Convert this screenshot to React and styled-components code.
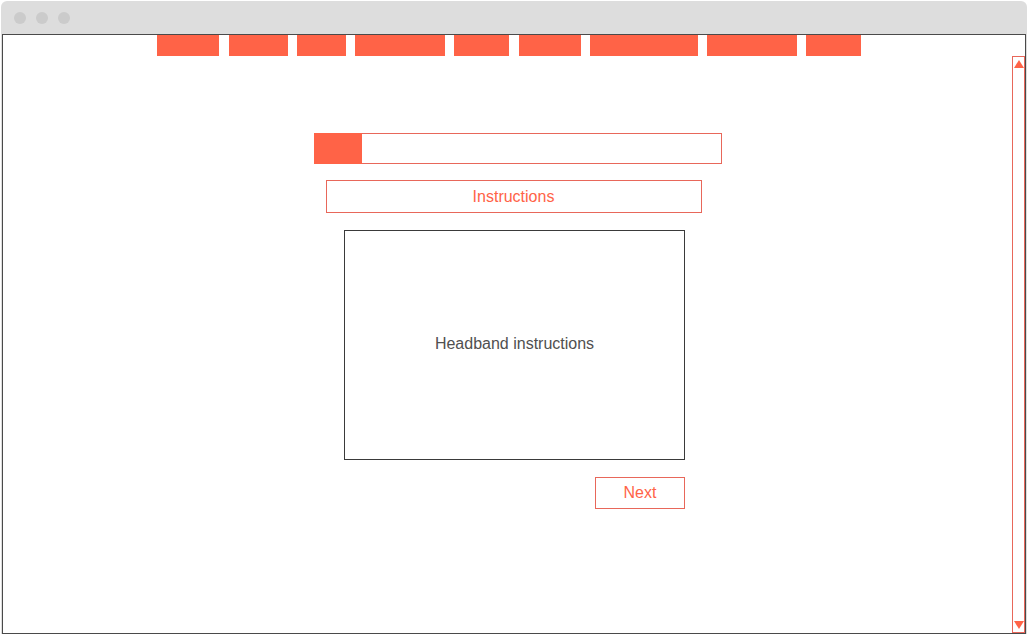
import React from "react"
import styled, { createGlobalStyle } from "styled-components"

const accent = "#ff6347"
const line = "#e8675a"

const Global = createGlobalStyle`
  html, body {
    margin: 0;
    padding: 0;
    background: #fff;
    font-family: "Liberation Sans", Arial, sans-serif;
  }
`

// [width, gap before]
const tabs = [
  [62, 0],
  [59, 10],
  [49, 9],
  [90, 9],
  [55, 9],
  [62, 10],
  [108, 9],
  [90, 9],
  [55, 9],
]

export default function App() {
  return (
    <>
      <Global />
      <Window>
        <TitleBar>
          <Dot />
          <Dot />
          <Dot />
        </TitleBar>
        <Content>
          <Nav>
            {tabs.map(([w, gap], i) => (
              <Tab key={i} $gap={gap} style={{ width: w }} />
            ))}
          </Nav>
          <Main>
            <Progress>
              <ProgressFill />
            </Progress>
            <Heading>Instructions</Heading>
            <Panel>Headband instructions</Panel>
            <Actions>
              <NextButton>Next</NextButton>
            </Actions>
          </Main>
          <Scrollbar>
            <Arrow $up />
            <Arrow />
          </Scrollbar>
        </Content>
      </Window>
    </>
  )
}

const Window = styled.div`
  margin: 1px 0 0 1px;
  width: 1026px;
  background: #dddddd;
  border-radius: 6px 6px 0 0;
`

const TitleBar = styled.div`
  height: 33px;
  display: flex;
  align-items: center;
  gap: 10px;
  padding-left: 13px;
  box-sizing: border-box;
`

const Dot = styled.span`
  width: 12px;
  height: 12px;
  border-radius: 50%;
  background: #cbcbcb;
`

const Content = styled.div`
  position: relative;
  margin: 0 1px;
  width: 1024px;
  height: 600px;
  box-sizing: border-box;
  border: 1px solid #4a4a4a;
  background: #fff;
`

const Nav = styled.div`
  display: flex;
  padding-left: 154px;
  height: 21px;
`

const Tab = styled.div`
  height: 21px;
  margin-left: ${(p) => p.$gap}px;
  background: ${accent};
`

const Main = styled.div`
  display: flex;
  flex-direction: column;
  align-items: center;
  padding-top: 77px;
`

const Progress = styled.div`
  width: 408px;
  height: 31px;
  box-sizing: border-box;
  border: 1px solid ${line};
  margin-left: 7px;
  display: flex;
`

const ProgressFill = styled.div`
  width: 48px;
  margin: -1px 0 -1px -1px;
  background: ${accent};
`

const Heading = styled.div`
  margin-top: 16px;
  width: 376px;
  height: 33px;
  box-sizing: border-box;
  border: 1px solid ${line};
  display: flex;
  align-items: center;
  justify-content: center;
  color: ${accent};
  font-size: 16px;
  margin-left: -1px;
`

const Panel = styled.div`
  margin-top: 17px;
  width: 341px;
  height: 230px;
  box-sizing: border-box;
  border: 1px solid #3a3a3a;
  display: flex;
  align-items: center;
  justify-content: center;
  color: #505050;
  font-size: 16px;
  padding-bottom: 2px;
  margin-left: 1px;
`

const Actions = styled.div`
  width: 341px;
  margin-left: 1px;
  margin-top: 17px;
  display: flex;
  justify-content: flex-end;
`

const NextButton = styled.div`
  width: 90px;
  height: 32px;
  box-sizing: border-box;
  border: 1px solid ${line};
  display: flex;
  align-items: center;
  justify-content: center;
  color: ${accent};
  font-size: 16px;
`

const Scrollbar = styled.div`
  position: absolute;
  right: 0;
  top: 21px;
  bottom: 0;
  width: 13px;
  box-sizing: border-box;
  border: 1px solid ${line};
  display: flex;
  flex-direction: column;
  justify-content: space-between;
  align-items: center;
  padding: 3px 0 3px;
`

const Arrow = styled.span`
  width: 0;
  height: 0;
  border-left: 5px solid transparent;
  border-right: 5px solid transparent;
  ${(p) =>
    p.$up
      ? `border-bottom: 8px solid ${accent};`
      : `border-top: 8px solid ${accent};`}
`
